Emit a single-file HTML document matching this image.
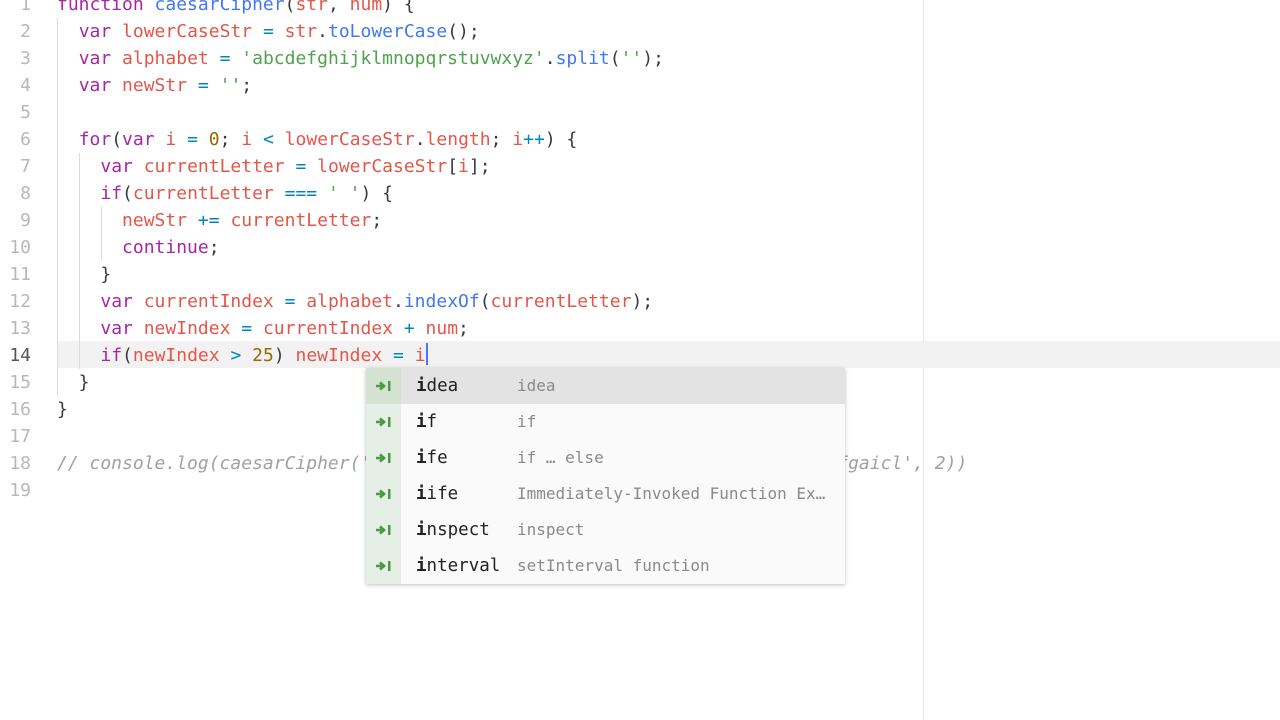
<!DOCTYPE html>
<html><head><meta charset="utf-8"><style>
html,body{margin:0;padding:0;width:1280px;height:720px;overflow:hidden;background:#ffffff;}
body{font-family:"DejaVu Sans Mono","Liberation Mono",monospace;font-size:18px;position:relative;color:#383a42;}
.cur{position:absolute;left:58px;top:341px;width:1222px;height:27px;background:#f2f2f2;}
.wrap{position:absolute;left:923px;top:0;width:1px;height:720px;background:#e6e6e6;}
.ln{position:absolute;left:0;width:31px;text-align:right;color:#b8b8b8;line-height:27px;}
.code{position:absolute;left:57px;white-space:pre;line-height:27px;}
.g{position:absolute;width:1px;background:#dcdcdc;}
.k{color:#a626a4}.v{color:#e45649}.f{color:#4078f2}.s{color:#50a14f}.n{color:#986801}.o{color:#0184bc}.c{color:#a0a1a7;font-style:italic}
.caret{display:inline-block;width:2px;height:22px;background:#526fff;vertical-align:-4px;}
.pop{position:absolute;left:366px;top:368px;width:479px;height:216px;background:#fafafa;box-shadow:0 1px 4px rgba(0,0,0,.25);}
.pop .ic{position:absolute;left:0;top:0;width:35px;height:216px;background:#e6efe5;}
.row{position:absolute;left:0;width:479px;height:36px;line-height:36px;}
.row.sel{background:#e3e3e3;}
.row.sel .ib{background:#d4e2d2;}
.ib{position:absolute;left:0;top:0;width:35px;height:36px;}
.ib svg{position:absolute;left:9px;top:12px;}
.m{position:absolute;left:50px;font-size:17.5px;color:#222;}
.m b{font-weight:bold;}
.d{position:absolute;left:151px;font-size:16px;color:#8a8a8a;}
</style></head><body>
<div class="wrap"></div>
<div class="cur"></div>
<div class="g" style="left:57px;top:18px;height:378px"></div>
<div class="g" style="left:79px;top:153px;height:216px"></div>
<div class="g" style="left:101px;top:207px;height:54px"></div>
<div class="ln" style="top:-9px">1</div>
<div class="ln" style="top:18px">2</div>
<div class="ln" style="top:45px">3</div>
<div class="ln" style="top:72px">4</div>
<div class="ln" style="top:99px">5</div>
<div class="ln" style="top:126px">6</div>
<div class="ln" style="top:153px">7</div>
<div class="ln" style="top:180px">8</div>
<div class="ln" style="top:207px">9</div>
<div class="ln" style="top:234px">10</div>
<div class="ln" style="top:261px">11</div>
<div class="ln" style="top:288px">12</div>
<div class="ln" style="top:315px">13</div>
<div class="ln" style="top:342px;color:#555">14</div>
<div class="ln" style="top:369px">15</div>
<div class="ln" style="top:396px">16</div>
<div class="ln" style="top:423px">17</div>
<div class="ln" style="top:450px">18</div>
<div class="ln" style="top:477px">19</div>
<div class="code" style="top:-9px"><span class="k">function</span> <span class="f">caesarCipher</span>(<span class="v">str</span>, <span class="v">num</span>) {
  <span class="k">var</span> <span class="v">lowerCaseStr</span> <span class="o">=</span> <span class="v">str</span>.<span class="f">toLowerCase</span>();
  <span class="k">var</span> <span class="v">alphabet</span> <span class="o">=</span> <span class="s">'abcdefghijklmnopqrstuvwxyz'</span>.<span class="f">split</span>(<span class="s">''</span>);
  <span class="k">var</span> <span class="v">newStr</span> <span class="o">=</span> <span class="s">''</span>;

  <span class="k">for</span>(<span class="k">var</span> <span class="v">i</span> <span class="o">=</span> <span class="n">0</span>; <span class="v">i</span> <span class="o">&lt;</span> <span class="v">lowerCaseStr</span>.<span class="v">length</span>; <span class="v">i</span><span class="o">++</span>) {
    <span class="k">var</span> <span class="v">currentLetter</span> <span class="o">=</span> <span class="v">lowerCaseStr</span>[<span class="v">i</span>];
    <span class="k">if</span>(<span class="v">currentLetter</span> <span class="o">===</span> <span class="s">' '</span>) {
      <span class="v">newStr</span> <span class="o">+=</span> <span class="v">currentLetter</span>;
      <span class="k">continue</span>;
    }
    <span class="k">var</span> <span class="v">currentIndex</span> <span class="o">=</span> <span class="v">alphabet</span>.<span class="f">indexOf</span>(<span class="v">currentLetter</span>);
    <span class="k">var</span> <span class="v">newIndex</span> <span class="o">=</span> <span class="v">currentIndex</span> <span class="o">+</span> <span class="v">num</span>;
    <span class="k">if</span>(<span class="v">newIndex</span> <span class="o">&gt;</span> <span class="n">25</span>) <span class="v">newIndex</span> <span class="o">=</span> <span class="v">i</span><span class="caret"></span>
  }
}

<span class="c">// console.log(caesarCipher('zzzzzzzzzzzzzzzzzzzzzzzzzzzzzzzzzzzzzzzzzzzfgaicl', 2))</span>
</div>
<div class="pop">
<div class="ic"></div>
<div class="row sel" style="top:0"><div class="ib"><svg width="18" height="12"><path d="M1 6h7M5 2.5l4 3.5-4 3.5" stroke="#4a9a45" stroke-width="2.6" fill="none"/><rect x="13" y="1" width="2.5" height="10" fill="#4a9a45"/></svg></div><span class="m"><b>i</b>dea</span><span class="d">idea</span></div>
<div class="row" style="top:36px"><div class="ib"><svg width="18" height="12"><path d="M1 6h7M5 2.5l4 3.5-4 3.5" stroke="#4a9a45" stroke-width="2.6" fill="none"/><rect x="13" y="1" width="2.5" height="10" fill="#4a9a45"/></svg></div><span class="m"><b>i</b>f</span><span class="d">if</span></div>
<div class="row" style="top:72px"><div class="ib"><svg width="18" height="12"><path d="M1 6h7M5 2.5l4 3.5-4 3.5" stroke="#4a9a45" stroke-width="2.6" fill="none"/><rect x="13" y="1" width="2.5" height="10" fill="#4a9a45"/></svg></div><span class="m"><b>i</b>fe</span><span class="d">if … else</span></div>
<div class="row" style="top:108px"><div class="ib"><svg width="18" height="12"><path d="M1 6h7M5 2.5l4 3.5-4 3.5" stroke="#4a9a45" stroke-width="2.6" fill="none"/><rect x="13" y="1" width="2.5" height="10" fill="#4a9a45"/></svg></div><span class="m"><b>i</b>ife</span><span class="d">Immediately-Invoked Function Ex…</span></div>
<div class="row" style="top:144px"><div class="ib"><svg width="18" height="12"><path d="M1 6h7M5 2.5l4 3.5-4 3.5" stroke="#4a9a45" stroke-width="2.6" fill="none"/><rect x="13" y="1" width="2.5" height="10" fill="#4a9a45"/></svg></div><span class="m"><b>i</b>nspect</span><span class="d">inspect</span></div>
<div class="row" style="top:180px"><div class="ib"><svg width="18" height="12"><path d="M1 6h7M5 2.5l4 3.5-4 3.5" stroke="#4a9a45" stroke-width="2.6" fill="none"/><rect x="13" y="1" width="2.5" height="10" fill="#4a9a45"/></svg></div><span class="m"><b>i</b>nterval</span><span class="d">setInterval function</span></div>
</div>
</body></html>
